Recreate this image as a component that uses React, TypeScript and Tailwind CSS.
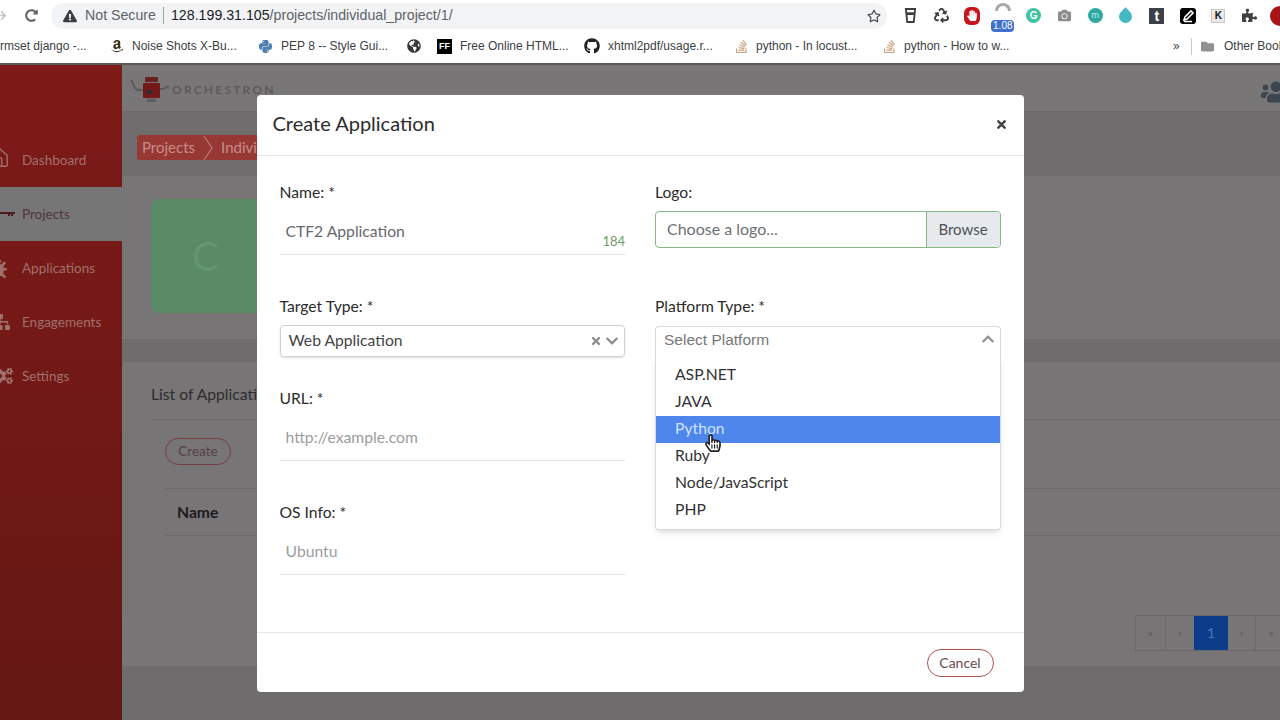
import {
  FaAmazon,
  FaArrowRight,
  FaBug,
  FaCamera,
  FaChevronDown,
  FaChevronUp,
  FaCogs,
  FaExclamationTriangle,
  FaFolder,
  FaGithub,
  FaGlobeAmericas,
  FaHandPaper,
  FaHandPointer,
  FaPuzzlePiece,
  FaPython,
  FaRecycle,
  FaRedoAlt,
  FaRegHandPointer,
  FaRegStar,
  FaSitemap,
  FaStackOverflow,
  FaTimes,
  FaUsers,
} from "react-icons/fa";
import { Home } from "lucide-react";

const KeyIcon = () => (
  <svg viewBox="0 0 16 8" className="w-4 h-2 -ml-[1px]" fill="currentColor">
    <rect x="0" y="2" width="16" height="2" />
    <rect x="9" y="4" width="2" height="2" />
    <rect x="12" y="4" width="2" height="2" />
  </svg>
);

const sideItems = [
  { label: "Dashboard", icon: <Home className="w-[22px] h-[22px] -ml-[12px] -mt-[4px]" strokeWidth={1.5} /> },
  { label: "Projects", icon: <KeyIcon />, active: true },
  { label: "Applications", icon: <FaBug className="w-5 h-5 -ml-[13px]" /> },
  { label: "Engagements", icon: <FaSitemap className="w-5 h-5 -ml-[10px]" /> },
  { label: "Settings", icon: <FaCogs className="w-5 h-5 -ml-[7px]" /> },
];

const platforms = ["ASP.NET", "JAVA", "Python", "Ruby", "Node/JavaScript", "PHP"];

const SoIcon = () => <FaStackOverflow className="w-[13px] h-[15px] text-[#c8a27c]" />;

const bookmarks = [
  { text: "rmset django -...", width: "w-[110px]" },
  { text: "Noise Shots X-Bu...", width: "w-[148px]", icon: <FaAmazon className="w-[14px] h-[14px] text-[#3a2d1a]" /> },
  { text: "PEP 8 -- Style Gui...", width: "w-[149px]", icon: <FaPython className="w-[15px] h-[15px] text-[#4b7fae]" /> },
  { text: "", width: "w-[30px]", icon: <FaGlobeAmericas className="w-[14px] h-[14px] text-[#35393c]" /> },
  {
    text: "Free Online HTML...",
    width: "w-[147px]",
    icon: <span className="w-[15px] h-[15px] bg-black text-white text-[9px] leading-[15px] font-bold text-center">FF</span>,
  },
  { text: "xhtml2pdf/usage.r...", width: "w-[151px]", icon: <FaGithub className="w-[16px] h-[16px] text-[#202124]" /> },
  { text: "python - In locust...", width: "w-[148px]", icon: <SoIcon /> },
  { text: "python - How to w...", width: "w-[290px]", icon: <SoIcon /> },
];

const extClass = "w-[30.8px] shrink-0 flex justify-center";

const Label = ({ children }: { children: string }) => (
  <label className="block h-5 leading-5 text-[15.7px] text-[#2b2b2b] whitespace-nowrap">{children}</label>
);

const UnderlineInput = ({ value, placeholder, count }: { value?: string; placeholder?: string; count?: string }) => (
  <div className="relative h-[52px] border-b border-[#e2e4e6] mt-[1px] pl-[6px] pt-[18px] text-[15.7px] leading-5">
    <span className={value ? "text-[#66696d]" : "text-[#9a9da0]"}>{value || placeholder}</span>
    {count && <span className="absolute right-0 top-[30px] text-[13px] leading-4 text-[#6f9a66]">{count}</span>}
  </div>
);

const BrowserBar = () => (
  <div className="h-[65px] shrink-0 bg-white border-b-2 border-[#5a5a5a] font-['Liberation_Sans',sans-serif] overflow-hidden">
    <div className="h-[31px] flex items-center">
      <FaArrowRight className="shrink-0 w-[11px] h-[11px] text-[#c4c6c8] -ml-[4px]" />
      <FaRedoAlt className="shrink-0 w-[13px] h-[13px] text-[#5f6368] ml-[18px]" />
      <div className="shrink-0 ml-[13px] w-[836px] h-[26px] rounded-full bg-[#f1f3f4] flex items-center pl-[12px] pr-[6px] text-[14.2px]">
        <FaExclamationTriangle className="w-[14px] h-[14px] text-[#3c4043]" />
        <span className="ml-[8px] text-[#5f6368]">Not Secure</span>
        <span className="ml-[7px] mr-[7px] w-px h-[17px] bg-[#a0a3a6]" />
        <span className="text-[#202124]">128.199.31.105</span>
        <span className="text-[#5f6368]">/projects/individual_project/1/</span>
        <FaRegStar className="w-[14px] h-[14px] text-[#45484b] ml-auto" />
      </div>
      <div className="shrink-0 ml-[8px] flex items-center">
        <span className={extClass}>
          <svg viewBox="0 0 14 16" className="w-[13px] h-[15px]" fill="none" stroke="#3c4043" strokeWidth="2">
            <path d="M2 1h10l-1.5 14h-7z" />
            <path d="M2.5 6h9" strokeWidth="3" />
          </svg>
        </span>
        <span className={extClass}><FaRecycle className="w-[15px] h-[15px] text-[#3c4043]" /></span>
        <span className={extClass}>
          <span className="w-[16px] h-[18px] rounded-[6px] bg-[#c4161c] flex"><FaHandPaper className="m-auto w-[10px] h-[11px] text-white" /></span>
        </span>
        <span className={`${extClass} relative h-5`}>
          <span className="absolute top-[-3px] w-[16px] h-[8px] rounded-t-full border-[3px] border-b-0 border-[#a6a9ac]" />
          <span className="absolute bottom-[-6px] w-[23px] bg-[#3f6fd0] text-white text-[10px] leading-[12px] text-center rounded-sm">1.08</span>
        </span>
        <span className={extClass}><span className="w-[15px] h-[15px] rounded-full bg-[#3fc3a0] text-white text-[10px] leading-[15px] text-center font-bold">G</span></span>
        <span className={extClass}><FaCamera className="w-[13px] h-[13px] text-[#8b8d8f]" /></span>
        <span className={extClass}><span className="w-[15px] h-[15px] rounded-full bg-[#2fa8a0] text-[#bfeeee] text-[9px] leading-[14px] text-center">m</span></span>
        <span className={extClass}><span className="w-[13px] h-[13px] mt-[2px] rounded-full rounded-tr-none -rotate-45 bg-[#45b8c4]" /></span>
        <span className={extClass}><span className="w-[15px] h-[16px] bg-[#3c4048] text-white text-[14px] leading-[16px] font-bold text-center">t</span></span>
        <span className={extClass}>
          <span className="w-[16px] h-[16px] rounded-[3px] bg-black flex">
            <svg viewBox="0 0 16 16" className="w-4 h-4" fill="none" stroke="white" strokeWidth="1.6">
              <path d="M4 12l1-3 6-6 2 2-6 6zM4 13.5h8" />
            </svg>
          </span>
        </span>
        <span className={extClass}><span className="w-[14px] h-[14px] bg-[#e9e9e9] border border-[#c8c8c8] text-[#111] text-[10px] leading-[12px] font-bold text-center">K</span></span>
        <span className={extClass}><FaPuzzlePiece className="w-[15px] h-[15px] text-[#3c4043]" /></span>
        <span className="w-[20px] h-[20px] rounded-full bg-[#a5151c] ml-[5px] shrink-0" />
      </div>
    </div>
    <div className="h-[30px] flex items-center text-[12px] text-[#3c4043] whitespace-nowrap">
      {bookmarks.map((b, i) => (
        <div key={i} className={`${b.width} shrink-0 flex items-center gap-[8px]`}>
          {b.icon}
          {b.text && <span>{b.text}</span>}
        </div>
      ))}
      <span className="shrink-0 w-[18px] text-[12px]">»</span>
      <span className="shrink-0 w-px h-[17px] bg-[#c8cacc]" />
      <FaFolder className="shrink-0 ml-[8px] w-[15px] h-[13px] text-[#8f9193]" />
      <span className="shrink-0 ml-[9px]">Other Bookmarks</span>
    </div>
  </div>
);

const Sidebar = () => (
  <aside className="w-[122px] shrink-0 bg-gradient-to-b from-[#7e1a18] to-[#651814] pt-[68px] overflow-hidden">
    {sideItems.map((item) => (
      <div
        key={item.label}
        className={`h-[54px] flex items-center text-[13.5px] ${item.active ? "bg-[#767676] text-[#53343a]" : "text-[#a0706c]"}`}
      >
        <span className={`w-[22px] shrink-0 flex items-center ${item.active ? "text-[#4f1a1e]" : "text-[#a0706c]"}`}>{item.icon}</span>
        <span className="whitespace-nowrap">{item.label}</span>
      </div>
    ))}
  </aside>
);

const Background = () => (
  <main className="flex-1 min-w-0 flex flex-col bg-[#777576] overflow-hidden">
    <div className="h-[47px] shrink-0 bg-[#787677] border-b border-[#6c6a6b] flex items-center justify-between pl-[8px]">
      <div className="flex items-center gap-[2px] mt-[3px]">
        <svg viewBox="0 0 40 28" className="w-10 h-7">
          <path d="M1 4l4 8c1 2 3 2 6 2h3M39 10l-6 3h-3" fill="none" stroke="#5c5a5c" strokeWidth="2" />
          <rect x="15" y="1" width="13" height="5" rx="1" fill="#6b2020" />
          <rect x="13" y="7" width="17" height="15" rx="1" fill="#73191b" />
          <rect x="17" y="14" width="5" height="4" fill="#2e2c2e" />
          <rect x="17" y="23" width="9" height="3" fill="#5c5a5c" />
        </svg>
        <span className="text-[12px] font-bold tracking-[2.2px] text-[#5c5a5c]">ORCHESTRON</span>
      </div>
      <FaUsers className="w-[30px] h-[26px] text-[#3c4650] -mr-[11px] mt-[8px]" />
    </div>
    <div className="h-[64px] shrink-0 bg-[#6f6d6e] pl-[15px] pt-[23px]">
      <div className="h-[25px] w-[160px] rounded-[3px] bg-[#973835] flex items-center pl-[5px] text-[15px] text-[#c98c88] whitespace-nowrap">
        Projects
        <svg viewBox="0 0 10 24" className="w-[10px] h-[24px] mx-[8px]" fill="none" stroke="#c98c88">
          <path d="M1 0l8 12-8 12" />
        </svg>
        Individual
      </div>
    </div>
    <div className="h-[163px] shrink-0 pl-[29px] pt-[23px]">
      <div className="w-[200px] h-[114px] rounded-lg bg-[#5a8a66] flex items-center pl-[41px] text-[40px] text-[#629670]">C</div>
    </div>
    <div className="h-[23px] shrink-0 bg-[#6e6c6d]" />
    <div className="h-[304px] shrink-0 pl-[29px]">
      <div className="h-[58px] border-b border-[#6c6a6b] flex items-center pt-[8px] text-[15.7px] text-[#2e2c2e] whitespace-nowrap">List of Applications</div>
      <div className="h-[68px] pl-[14px] pt-[18px]">
        <button className="w-[66px] h-[27px] rounded-full border border-[#7a3b44] text-[13.5px] text-[#57404a]">Create</button>
      </div>
      <div className="h-[48px] ml-[14px] pt-[1px] border-y border-[#6c6a6b] flex items-center pl-[12px] text-[15.7px] font-bold text-[#1c1b1c]">Name</div>
      <div className="mt-[79px] ml-[984px] flex h-[36px] w-[200px] text-[#5c5a5c] text-[12px] border border-[#6a6869]">
        <span className="w-[30px] flex items-center justify-center border-r border-[#6a6869]">«</span>
        <span className="w-[28px] flex items-center justify-center">‹</span>
        <span className="w-[34px] flex items-center justify-center bg-[#0d3d8a] text-[#4c78b8] text-sm">1</span>
        <span className="w-[28px] flex items-center justify-center border-r border-[#6a6869]">›</span>
        <span className="w-[30px] flex items-center justify-center">»</span>
      </div>
    </div>
    <div className="flex-1 bg-[#6e6c6d]" />
  </main>
);

const Modal = () => (
  <div className="absolute inset-0 pt-[95px] flex justify-center items-start">
    <div className="relative w-[767px] h-[597px] bg-white rounded-[4px] flex flex-col font-['Lato',sans-serif]">
      <div className="h-[61px] shrink-0 border-b border-[#e6e8ea] flex items-center justify-between pl-[16px] pr-[16px]">
        <h2 className="text-[20px] text-[#2b2b2b] mb-[4px]">Create Application</h2>
        <FaTimes className="w-[13px] h-[13px] text-[#444] mb-[2px]" />
      </div>

      <div className="h-[476px] shrink-0 grid grid-cols-2 gap-x-[30px] pl-[23px] pr-[23px] pt-[26px]">
        <div className="flex flex-col">
          <Label>Name: *</Label>
          <UnderlineInput value="CTF2 Application" count="184" />
          <div className="mt-[41px]"><Label>Target Type: *</Label></div>
          <div className="mt-[9px] h-[32px] pb-[1px] rounded-[4px] border border-[#cfd2d5] shadow-sm flex items-center pl-[8px] pr-[5px] text-[15.7px] text-[#444]">
            Web Application
            <FaTimes className="ml-auto w-[12px] h-[12px] text-[#8a8d90]" />
            <FaChevronDown className="ml-[3px] w-[14px] h-[14px] text-[#8a8d90]" />
          </div>
          <div className="mt-[31px]"><Label>URL: *</Label></div>
          <UnderlineInput placeholder="http://example.com" />
          <div className="mt-[41px]"><Label>OS Info: *</Label></div>
          <UnderlineInput placeholder="Ubuntu" />
        </div>

        <div className="relative flex flex-col">
          <Label>Logo:</Label>
          <div className="mt-[9px] h-[37px] pb-[1px] rounded-[4px] border border-[#88b884] flex text-[16px]">
            <span className="flex-1 pl-[11px] flex items-center text-[#6d7175]">Choose a logo...</span>
            <span className="w-[74px] -mb-[1px] pb-[1px] bg-[#e6eaee] border-l border-[#88b884] rounded-r-[3px] flex items-center justify-center text-[15px] text-[#4e5256]">Browse</span>
          </div>
          <div className="mt-[48px]"><Label>Platform Type: *</Label></div>
          <div className="relative mt-[10px] h-[32px] pb-[6px] rounded-t-[4px] border border-b-0 border-[#d8dbde] flex items-center pl-[8px] pr-[5px] font-['Liberation_Sans',sans-serif] text-[15.5px] text-[#777]">
            Select Platform
            <FaChevronUp className="ml-auto mb-[2px] w-[14px] h-[14px] text-[#8f9295]" />
            <ul className="absolute left-[-1px] right-[-1px] top-[31px] h-[172px] pt-[4px] bg-white border border-t-0 border-[#d8dbde] rounded-b-[4px] shadow-md font-['Lato',sans-serif] text-[15.7px] text-[#333]">
              {platforms.map((p) => (
                <li
                  key={p}
                  className={`h-[27px] pb-[2px] flex items-center pl-[19px] ${p === "Python" ? "bg-[#4f86ec] text-[#cfe2ff]" : ""}`}
                >
                  {p}
                </li>
              ))}
            </ul>
          </div>
          <span className="absolute left-[50px] top-[252px] w-[16px] h-[18px] text-[#222]">
            <FaHandPointer className="absolute inset-0 w-[16px] h-[18px] text-white" />
            <FaRegHandPointer className="absolute inset-0 w-[16px] h-[18px]" />
          </span>
        </div>
      </div>

      <div className="flex-1 border-t border-[#e6e8ea] flex items-center justify-end pr-[30px]">
        <button className="w-[67px] h-[28px] rounded-full border border-[#b5504c] text-[14px] text-[#6a4a4c]">Cancel</button>
      </div>
    </div>
  </div>
);

export default function App() {
  return (
    <div className="relative w-[1280px] h-[720px] overflow-hidden flex flex-col font-['Lato',sans-serif]">
      <BrowserBar />
      <div className="flex-1 min-h-0 flex">
        <Sidebar />
        <Background />
      </div>
      <Modal />
    </div>
  );
}
